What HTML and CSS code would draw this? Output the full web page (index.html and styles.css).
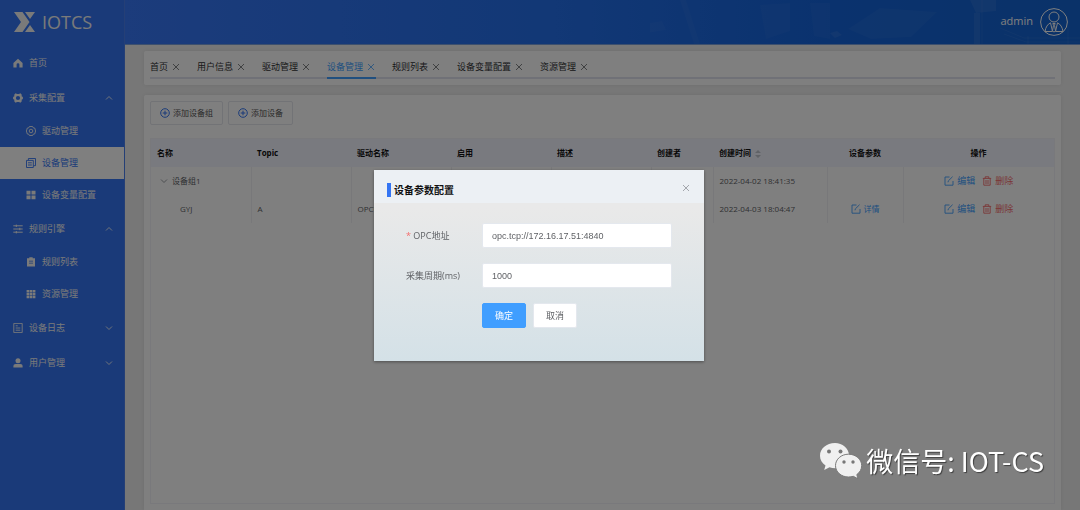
FILE: index.html
```html
<!DOCTYPE html>
<html lang="zh-CN">
<head>
<meta charset="utf-8">
<meta name="viewport" content="width=device-width, initial-scale=1">
<title>IOTCS 设备管理</title>
<link rel="stylesheet" href="styles.css">
</head>
<body>
<svg class="sprite" aria-hidden="true">
  <symbol id="i-close" viewBox="0 0 8 8"><path d="M1 1l6 6M7 1l-6 6" fill="none" stroke="currentColor" stroke-width=".8"/></symbol>
  <symbol id="i-up" viewBox="0 0 8 8"><path d="M1 5.500l3-3 3 3" fill="none" stroke="currentColor" stroke-width=".9"/></symbol>
  <symbol id="i-down" viewBox="0 0 8 8"><path d="M1 2.500l3 3 3-3" fill="none" stroke="currentColor" stroke-width=".9"/></symbol>
  <symbol id="i-plus" viewBox="0 0 10 10"><path d="M5 .7a4.300 4.300 0 1 0 0 8.600 4.300 4.300 0 0 0 0-8.600zM5 2.700v4.600M2.700 5h4.600" fill="none" stroke="currentColor"/></symbol>
  <symbol id="i-edit" viewBox="0 0 10 10"><path d="M5.500 1H1v8.200h8V5M4 6.300l.3-1.400L8.600.7" fill="none" stroke="currentColor" stroke-width=".9"/></symbol>
  <symbol id="i-trash" viewBox="0 0 10 10"><path d="M.8 2.400h8.400M3.200 2.200V.8h3.600v1.400M1.800 2.600v6.600h6.400V2.600M4 4v4M6 4v4" fill="none" stroke="currentColor" stroke-width=".9"/></symbol>
</svg>

<div class="app">
  <aside class="sidebar">
    <a class="brand" href="#">
      <svg class="brand-mark" viewBox="0 0 21 20"><path d="M0 0h8.500l7 10-7 10H0l7-10zM11 0h10l-5 7zM11 20h10l-5-7z" fill="currentColor"/></svg>
      <span>IOTCS</span>
    </a>
    <nav class="menu">
      <a class="item" href="#">
        <svg class="icon" viewBox="0 0 10 10"><path d="M5 .8L.4 5v4.400h3.200V6.600a1.400 1.400 0 0 1 2.800 0v2.800h3.200V5z" fill="currentColor"/></svg>
        <span>首页</span>
      </a>
      <a class="item" href="#">
        <svg class="icon" viewBox="0 0 10 10"><path fill-rule="evenodd" d="M2.600.3l1.400.6h2L7.400.3l1.400 1.500-.2 1.400L9.900 4v2l-1.300.8.2 1.400-1.400 1.500L6 9.100H4l-1.400.6-1.400-1.500.2-1.400L.1 6V4l1.300-.8-.2-1.400zM5 2.900a2.100 2.100 0 1 0 0 4.200 2.100 2.100 0 0 0 0-4.200z" fill="currentColor"/></svg>
        <span>采集配置</span><svg class="arrow"><use href="#i-up"/></svg>
      </a>
      <a class="item sub" href="#">
        <svg class="icon" viewBox="0 0 10 10"><path d="M3.400.5h3.200l.6 1.300 1.500.2.900 3-.9 3-1.500.2-.6 1.300H3.400l-.6-1.300-1.500-.2L.4 5l.9-3 1.500-.2z" fill="none" stroke="currentColor" stroke-width=".9"/><circle cx="5" cy="5" r="1.800" fill="none" stroke="currentColor" stroke-width=".9"/></svg>
        <span>驱动管理</span>
      </a>
      <a class="item sub active" href="#" aria-current="page">
        <svg class="icon" viewBox="0 0 10 10"><path d="M.5 2.400h6.800v7.100H.5zM2.400 2.200V.5h7.100v7.200H7.500M2 4.800h3.800M2 7h3.800" fill="none" stroke="currentColor" stroke-width=".9"/></svg>
        <span>设备管理</span>
      </a>
      <a class="item sub" href="#">
        <svg class="icon" viewBox="0 0 10 10"><path d="M.5.8h4v3.700h-4zM5.500.8h4v3.700h-4zM.5 5.600h4v3.700h-4zM5.500 5.600h4v3.700h-4z" fill="currentColor"/></svg>
        <span>设备变量配置</span>
      </a>
      <a class="item" href="#">
        <svg class="icon" viewBox="0 0 10 10"><path d="M.3 1.800h9.400M.3 5h9.400M.3 8.200h9.400M3.300.6V3M6.800 3.800v2.400M3.300 7v2.400" fill="none" stroke="currentColor"/></svg>
        <span>规则引擎</span><svg class="arrow"><use href="#i-up"/></svg>
      </a>
      <a class="item sub" href="#">
        <svg class="icon" viewBox="0 0 10 10"><path fill-rule="evenodd" d="M1 1.200h2.300V.3h3.400v.9H9v8.400H1zM3 4.600h4v-.8H3zM3 6.600h4v-.8H3z" fill="currentColor"/></svg>
        <span>规则列表</span>
      </a>
      <a class="item sub" href="#">
        <svg class="icon" viewBox="0 0 10 10"><path d="M.6 1h2.600v2.400H.6zM3.700 1h2.600v2.400H3.700zM6.800 1h2.600v2.400H6.800zM.6 3.900h2.600v2.400H.6zM3.700 3.900h2.600v2.400H3.700zM6.800 3.900h2.600v2.400H6.800zM.6 6.800h2.600v2.400H.6zM3.700 6.800h2.600v2.400H3.700zM6.800 6.800h2.600v2.400H6.800z" fill="currentColor"/></svg>
        <span>资源管理</span>
      </a>
      <a class="item" href="#">
        <svg class="icon" viewBox="0 0 10 10"><path d="M.8.4h8.400v9.200H.8zM2.700 2.800h2M2.700 5h4.600M2.700 7.200h4.600" fill="none" stroke="currentColor" stroke-width=".9"/></svg>
        <span>设备日志</span><svg class="arrow"><use href="#i-down"/></svg>
      </a>
      <a class="item" href="#">
        <svg class="icon" viewBox="0 0 10 10"><circle cx="5" cy="2.800" r="2.500" fill="currentColor"/><path d="M.4 9.500V8q0-2 2.200-2h4.800q2.200 0 2.200 2v1.500z" fill="currentColor"/></svg>
        <span>用户管理</span><svg class="arrow"><use href="#i-down"/></svg>
      </a>
    </nav>
  </aside>

  <div class="page">
    <header class="topbar">
      <svg class="skyline" viewBox="0 0 430 44" preserveAspectRatio="xMaxYMid slice" aria-hidden="true">
        <path d="M-6 24l18-3 4 9-20 3zM30 0l14 44h6L36 0zM110 5l30-2v28l-24 8zM160 3h20v36l-16-3z" opacity=".03"/>
        <path d="M198 29l32-21 57 4-26 25-40 2z" opacity=".04"/>
        <path d="M180 33l7-2 5 4-7 3zM320 0l6 13 20-2V0zM324 13v31h6V13z" opacity=".07"/>
        <path d="M350 28l24 10h56M354 34l22 8h54M378 36v8M418 26v18M332 0v44" fill="none" stroke="#fff" opacity=".06"/>
      </svg>
      <span class="user">admin</span>
      <svg class="avatar" viewBox="0 0 28 28" fill="none" stroke="currentColor"><circle cx="14" cy="14" r="13.400"/><circle cx="14" cy="9" r="5"/><path d="M10.500 14.800Q6 17 5 23.500h7.500zM17.500 14.800Q22 17 23 23.500h-7.500zM12.800 15.500h2.400l-.7 1.800 1 5.400-1.500 1.500-1.500-1.500 1-5.400z"/></svg>
    </header>

    <main class="content">
      <section class="card tabs-card">
        <nav class="tabs">
          <a class="tab" href="#">首页<svg><use href="#i-close"/></svg></a>
          <a class="tab" href="#">用户信息<svg><use href="#i-close"/></svg></a>
          <a class="tab" href="#">驱动管理<svg><use href="#i-close"/></svg></a>
          <a class="tab current" href="#">设备管理<svg><use href="#i-close"/></svg></a>
          <a class="tab" href="#">规则列表<svg><use href="#i-close"/></svg></a>
          <a class="tab" href="#">设备变量配置<svg><use href="#i-close"/></svg></a>
          <a class="tab" href="#">资源管理<svg><use href="#i-close"/></svg></a>
        </nav>
      </section>

      <section class="card list-card">
        <div class="toolbar">
          <button class="tool" type="button"><svg class="icon"><use href="#i-plus"/></svg>添加设备组</button>
          <button class="tool" type="button"><svg class="icon"><use href="#i-plus"/></svg>添加设备</button>
        </div>
        <div class="table-box">
          <table class="grid">
            <colgroup>
              <col class="c-std"><col class="c-std"><col class="c-std"><col class="c-std"><col class="c-std">
              <col class="c-by"><col class="c-time"><col class="c-param"><col class="c-ops">
            </colgroup>
            <thead>
              <tr>
                <th>名称</th><th>Topic</th><th>驱动名称</th><th>启用</th><th>描述</th><th>创建者</th>
                <th>创建时间<svg class="sort" viewBox="0 0 6 8"><path d="M3 0l3 3H0zM3 8l3-3H0z" fill="currentColor"/></svg></th>
                <th class="mid">设备参数</th><th class="mid">操作</th>
              </tr>
            </thead>
            <tbody>
              <tr>
                <td><span class="group"><svg><use href="#i-down"/></svg>设备组1</span></td>
                <td></td><td></td><td></td><td></td><td></td>
                <td>2022-04-02 18:41:35</td>
                <td></td>
                <td><div class="ops"><a class="edit" href="#"><svg class="icon"><use href="#i-edit"/></svg>编辑</a><a class="del" href="#"><svg class="icon"><use href="#i-trash"/></svg>删除</a></div></td>
              </tr>
              <tr>
                <td><span class="child">GYJ</span></td>
                <td>A</td><td>OPCUA</td><td></td><td></td><td></td>
                <td>2022-04-03 18:04:47</td>
                <td><div class="ops small"><a class="edit" href="#"><svg class="icon"><use href="#i-edit"/></svg>详情</a></div></td>
                <td><div class="ops"><a class="edit" href="#"><svg class="icon"><use href="#i-edit"/></svg>编辑</a><a class="del" href="#"><svg class="icon"><use href="#i-trash"/></svg>删除</a></div></td>
              </tr>
            </tbody>
          </table>
        </div>
      </section>
    </main>
  </div>
</div>

<div class="overlay">
  <form class="dialog" role="dialog" aria-labelledby="dlg-title">
    <header class="dialog-head">
      <h2 id="dlg-title">设备参数配置</h2>
      <button class="dismiss" type="button" aria-label="关闭"><svg><use href="#i-close"/></svg></button>
    </header>
    <div class="dialog-body">
      <div class="field">
        <label for="addr"><span class="req">*</span> OPC地址</label>
        <input id="addr" type="text" value="opc.tcp://172.16.17.51:4840">
      </div>
      <div class="field">
        <label for="cycle">采集周期(ms)</label>
        <input id="cycle" type="text" value="1000">
      </div>
      <div class="actions">
        <button class="btn primary" type="button">确定</button>
        <button class="btn" type="button">取消</button>
      </div>
    </div>
  </form>
</div>

<div class="contact">
  <svg viewBox="0 0 42 36">
    <path d="M15 0C6.500 0 0 5.600 0 12.700c0 4 2 7.500 5.500 9.800L4.200 27l5.300-2.700q2.500.9 6 .9L29 12C28.500 5 22.500 0 15 0z" fill="#f0f0f0"/>
    <path d="M28.500 11.200c-7.200 0-13 5-13 11.400s5.800 11.400 13 11.400q2.500 0 4.800-.7l4.700 2.500-1.200-4.200c3-2.200 4.900-5.300 4.900-9 0-6.400-6-11.400-13.200-11.400z" fill="#f0f0f0" stroke="#7a7a7a" stroke-width="1"/>
    <g fill="#777"><circle cx="9" cy="8.500" r="2"/><circle cx="20.500" cy="8.500" r="2"/><circle cx="24" cy="19" r="1.700"/><circle cx="33" cy="19" r="1.700"/></g>
  </svg>
  <span>微信号: IOT-CS</span>
</div>
</body>
</html>
```

FILE: styles.css
```css
* { box-sizing: border-box; }

body {
  margin: 0;
  font: 9px/12px "Open Sans", "Noto Sans CJK SC", sans-serif;
  color: #606266;
}

a { color: inherit; text-decoration: none; }
button, input { font: inherit; }
.sprite { display: none; }
.icon { width: 10px; height: 10px; flex: none; }

.app { display: flex; height: 100vh; overflow: hidden; }

/* Sidebar */
.sidebar { flex: 0 0 125px; background: #3475f3; color: #f4f4f4; border-right: 1px solid #4a7fec; }
.brand { display: flex; align-items: center; gap: 7px; height: 45px; padding: 0 0 2px 14px; font-size: 18px; line-height: 24px; }
.brand-mark { width: 21px; height: 20px; }
.item { display: flex; align-items: center; gap: 6px; height: 35px; padding: 0 11px 0 13px; }
.item.sub { height: 32px; padding-left: 26px; }
.item.active { background: #fff; color: #3475f3; }
.arrow { width: 8px; height: 8px; margin-left: auto; }

/* Top bar */
.page { flex: 1; min-width: 0; display: flex; flex-direction: column; background: #efefef; }
.topbar {
  flex: 0 0 45px;
  position: relative;
  display: flex;
  align-items: center;
  justify-content: flex-end;
  gap: 7px;
  padding-right: 12px;
  background: linear-gradient(90deg, #3878f8, #2470ec 45%, #1464dc 75%, #1464d2);
  border-bottom: 1px solid #7ba0dc;
  color: #fff;
}
.skyline { position: absolute; top: 0; right: 0; width: 430px; height: 44px; fill: #fff; }
.user { font-size: 11px; line-height: 16px; font-weight: 500; padding-bottom: 2px; }
.avatar { width: 28px; height: 28px; }

/* Content */
.content { flex: 1; display: flex; flex-direction: column; gap: 10px; padding: 6px 19px 0; }
.card { background: #fff; border-radius: 2px; box-shadow: 0 0 5px rgba(0, 0, 0, .08); padding: 6px; }
.tabs { display: flex; gap: 16px; border-bottom: 2px solid #e0e2ee; }
.tab { display: flex; align-items: center; gap: 4px; height: 22px; margin-bottom: -2px; padding-right: 1px; border-bottom: 2px solid transparent; color: #303133; }
.tab svg { width: 8px; height: 8px; color: #606266; }
.tab.current, .tab.current svg { color: #409eff; }
.tab.current { border-color: #409eff; }

.list-card { flex: 1; display: flex; flex-direction: column; gap: 13px; border-radius: 2px 2px 0 0; }
.toolbar { display: flex; gap: 5px; }
.tool { display: flex; align-items: center; gap: 3px; height: 24px; padding: 0 9px; border: 1px solid #e4e6ec; border-radius: 2px; background: #fff; color: #555; font-size: 8px; }
.tool .icon { color: #3475f3; }

.table-box { flex: 1; border: 1px solid #f2f3f8; }
.grid { width: 100%; table-layout: fixed; border-collapse: collapse; font-size: 8px; }
.grid th { height: 28px; padding: 0 6px; background: #f2f4ff; color: #111; text-align: left; font-weight: 700; }
.grid th.mid { text-align: center; }
.grid td { height: 28px; padding: 0 6px; border-right: 1px solid #f0f1f5; }
.grid td:last-child { border-right: 0; }
.c-std { width: 100px; }
.c-by { width: 62px; }
.c-time { width: 114px; }
.c-param { width: 76px; }
.sort { width: 6px; height: 8px; margin-left: 4px; color: #c0c4cc; vertical-align: middle; }
.group { display: flex; align-items: center; gap: 4px; padding-left: 3px; }
.group svg { width: 8px; height: 8px; color: #909399; }
.child { padding-left: 23px; }
.ops { display: flex; justify-content: center; gap: 7px; font-size: 9px; }
.ops.small { font-size: 8px; }
.ops a { display: flex; align-items: center; gap: 3px; }
.edit { color: #409eff; }
.del { color: #f56c6c; }

/* Dialog */
.overlay { position: fixed; inset: 0; padding: 170px 2px 0 0; background: rgba(0, 0, 0, .5); }
.dialog { width: 330px; margin: 0 auto; background: linear-gradient(#e9e9e9 20%, #d4e1e7); box-shadow: 0 1px 3px rgba(0, 0, 0, .4); }
.dialog-head { display: flex; align-items: flex-start; justify-content: space-between; height: 33px; padding: 13px 13px 0; background: #ecf0f4; }
.dialog-head h2 { margin: 0; padding-left: 3px; border-left: 4px solid #3475f3; font-size: 10px; line-height: 14px; color: #111; }
.dismiss { display: flex; padding: 1px; border: 0; background: none; color: #909399; }
.dismiss svg { width: 8px; height: 8px; }
.dialog-body { display: flex; flex-direction: column; gap: 15px; padding: 20px 32px 33px; }
.field { display: flex; align-items: center; }
.field label { flex: 0 0 76px; }
.req { color: #f56c6c; }
.field input { flex: 1; min-width: 0; height: 25px; padding: 0 9px; border: 1px solid #e4e8ee; border-radius: 2px; background: #fff; color: #606266; font-family: "Liberation Sans", sans-serif; }
.actions { display: flex; gap: 7px; padding-left: 76px; }
.btn { width: 44px; height: 25px; padding: 0; border: 1px solid #e4e8ee; border-radius: 2px; background: #fff; color: #606266; }
.btn.primary { border-color: #409eff; background: #409eff; color: #fff; }

/* Contact mark */
.contact { position: fixed; right: 36px; bottom: 31px; display: flex; align-items: center; gap: 4px; color: #fff; font: 400 27px/36px "Noto Sans CJK SC", sans-serif; text-shadow: 1px 1px 1px rgba(0, 0, 0, .5); }
.contact svg { width: 42px; height: 36px; }
```
